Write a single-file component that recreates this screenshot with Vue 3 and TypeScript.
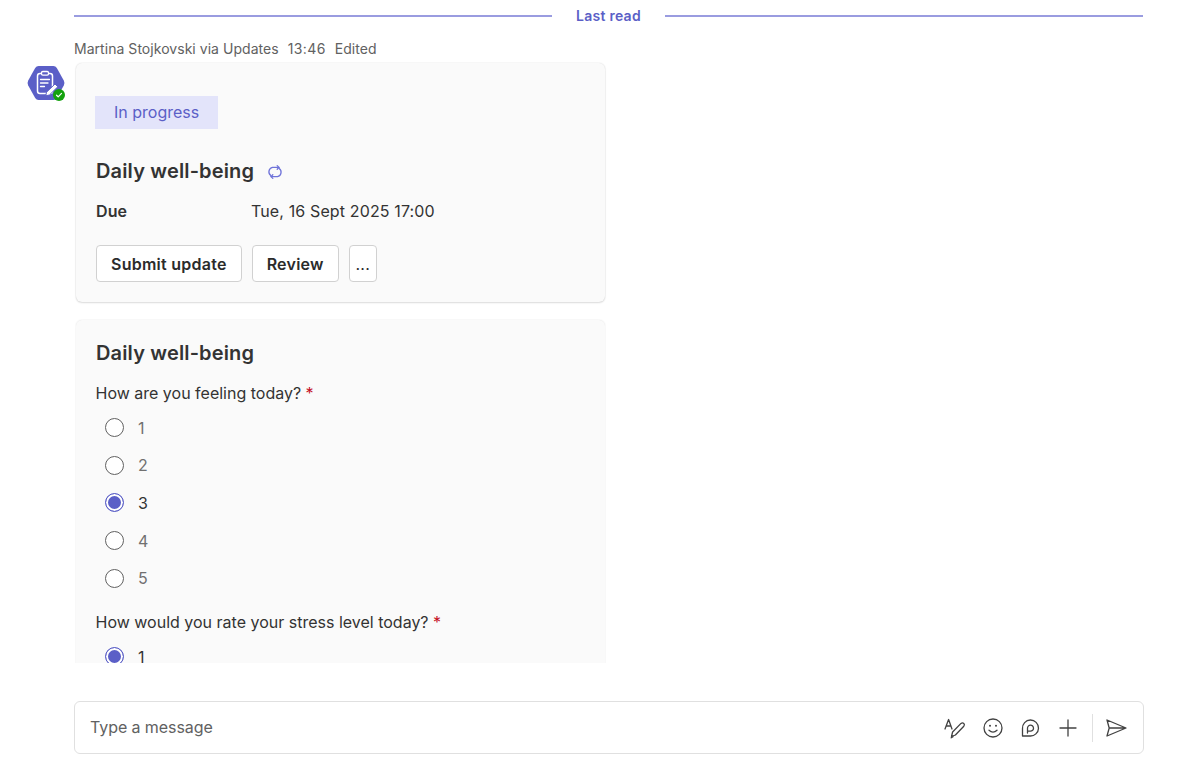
<script setup lang="ts">
const options = [
  { label: '1', checked: false },
  { label: '2', checked: false },
  { label: '3', checked: true },
  { label: '4', checked: false },
  { label: '5', checked: false },
]
</script>

<template>
  <div class="page">
    <div class="feed">
      <div class="divider">
        <span class="line"></span>
        <span class="divider-text">Last read</span>
        <span class="line"></span>
      </div>
      <div class="message">
        <div class="avatar">
          <svg width="38" height="36" viewBox="0 0 38 36">
            <path d="M1.2 15.6 L8.2 3 Q9.4 1 11.6 1 H26.4 Q28.6 1 29.8 3 L36.8 15.6 Q38 18 36.8 20.4 L29.8 33 Q28.6 35 26.4 35 H11.6 Q9.4 35 8.2 33 L1.2 20.4 Q0 18 1.2 15.6 Z" fill="#5b5fc7" />
            <rect x="10.5" y="8.5" width="15" height="20" rx="2.5" fill="none" stroke="#fff" stroke-width="1.5" />
            <rect x="14.5" y="6.5" width="7" height="3.6" rx="1.3" fill="#5b5fc7" stroke="#fff" stroke-width="1.3" />
            <path d="M13.5 14.5 H22.5 M13.5 18 H21 M13.5 21.5 H17.5" stroke="#fff" stroke-width="1.3" stroke-linecap="round" />
            <path d="M19.5 27.2 L28 19 L30.8 21.8 L22.4 30 L18.8 30.8 Z" fill="#fff" stroke="#5b5fc7" stroke-width="1" />
          </svg>
          <span class="presence">
            <svg width="8" height="8" viewBox="0 0 8 8">
              <path d="M1.5 4.2 L3.2 5.8 L6.5 2.4" fill="none" stroke="#fff" stroke-width="1.2" stroke-linecap="round" stroke-linejoin="round" />
            </svg>
          </span>
        </div>
        <div class="content">
          <div class="meta">
            <span>Martina Stojkovski via Updates</span>
            <span class="time">13:46</span>
            <span>Edited</span>
          </div>
          <section class="card card-status">
            <div class="badge">In progress</div>
            <div class="title-row">
              <h2 class="title">Daily well-being</h2>
              <svg class="repeat" width="16" height="16" viewBox="0 0 16 16" fill="none" stroke="#6f73d9" stroke-width="1.3" stroke-linecap="round" stroke-linejoin="round">
                <path d="M3.8 11.6 A4.6 4.6 0 0 1 5.5 3.4 H12" />
                <path d="M10.2 1.6 L12 3.4 L10.2 5.2" />
                <path d="M12.2 4.4 A4.6 4.6 0 0 1 10.5 12.6 H4" />
                <path d="M5.8 10.8 L4 12.6 L5.8 14.4" />
              </svg>
            </div>
            <div class="due">
              <span class="due-label">Due</span>
              <span>Tue, 16 Sept 2025 17:00</span>
            </div>
            <div class="actions">
              <button class="btn" type="button">Submit update</button>
              <button class="btn" type="button">Review</button>
              <button class="btn btn-more" type="button">...</button>
            </div>
          </section>
          <section class="card card-form">
            <h2 class="title">Daily well-being</h2>
            <p class="question">How are you feeling today? <span class="req">*</span></p>
            <div class="radios">
              <div v-for="o in options" :key="o.label" class="radio" :class="{ on: o.checked }">
                <span class="dot"></span>
                <span>{{ o.label }}</span>
              </div>
            </div>
            <p class="question q2">How would you rate your stress level today? <span class="req">*</span></p>
            <div class="radios r2">
              <div class="radio on">
                <span class="dot"></span>
                <span>1</span>
              </div>
            </div>
          </section>
        </div>
      </div>
    </div>
    <div class="composer">
      <span class="placeholder">Type a message</span>
      <div class="tools">
        <svg width="24" height="24" viewBox="0 0 24 24" fill="none" stroke="#424242" stroke-width="1.3" stroke-linecap="round" stroke-linejoin="round">
          <path d="M2 13 L5.6 3.5 L9 13 M3.2 10 H8" />
          <path d="M8.5 20.5 L9.6 16 L18 7.4 Q19.5 6.2 20.8 7.4 Q22 8.8 20.8 10.2 L12.4 19 Z" />
          <path d="M8.2 21.8 L10 20.6" />
        </svg>
        <svg width="24" height="24" viewBox="0 0 24 24" fill="none" stroke="#424242" stroke-width="1.3" stroke-linecap="round">
          <circle cx="12" cy="12" r="9" />
          <path d="M8 14.2 Q12 18 16 14.2" />
          <circle cx="9" cy="9.8" r="1" fill="#424242" stroke="none" />
          <circle cx="15" cy="9.8" r="1" fill="#424242" stroke="none" />
        </svg>
        <svg width="24" height="24" viewBox="0 0 24 24" fill="none" stroke="#424242" stroke-width="1.3" stroke-linecap="round" stroke-linejoin="round">
          <path d="M4.5 20 V12.5 A8 8 0 1 1 12 20 Z" />
          <path d="M9.5 17 V12.3 A3 3 0 1 1 12.5 15.2 H9.7" />
        </svg>
        <svg width="24" height="24" viewBox="0 0 24 24" fill="none" stroke="#424242" stroke-width="1.3" stroke-linecap="round">
          <path d="M12 4 V20 M4 12 H20" />
        </svg>
        <span class="sep"></span>
        <svg class="send" width="24" height="24" viewBox="0 0 24 24" fill="none" stroke="#424242" stroke-width="1.3" stroke-linejoin="round">
          <path d="M3 4 L22 12 L3 20 L5.2 12 Z M5.2 12 H22" />
        </svg>
      </div>
    </div>
  </div>
</template>

<style scoped>
.page {
  width: 1200px;
  height: 770px;
  display: flex;
  flex-direction: column;
  overflow: hidden;
  background: #fff;
  font-family: Inter, "Noto Sans", sans-serif;
  color: #242424;
}
.feed {
  height: 663px;
  overflow: hidden;
  flex: none;
}
.divider {
  margin: 5.5px 57px 0 74px;
  height: 20px;
  display: flex;
  align-items: center;
  gap: 24px;
}
.line {
  flex: 1;
  height: 2px;
  background: #9a9ce0;
}
.divider-text {
  font-size: 14px;
  font-weight: 600;
  color: #5b5fc7;
  letter-spacing: 0.25px;
}
.message {
  display: flex;
  margin-top: 13.5px;
}
.avatar {
  position: relative;
  flex: none;
  width: 38px;
  height: 36px;
  margin: 26px 9px 0 27px;
}
.presence {
  position: absolute;
  right: 0;
  bottom: 0;
  width: 12px;
  height: 12px;
  border-radius: 50%;
  background: #13a10e;
  display: flex;
  align-items: center;
  justify-content: center;
}
.content {
  width: 532px;
}
.meta {
  height: 19px;
  display: flex;
  gap: 9px;
  align-items: center;
  font-size: 14px;
  letter-spacing: 0.04px;
  color: #616161;
}
.time {
  letter-spacing: 0.4px;
}
.card {
  width: 529px;
  margin-left: 2px;
  box-sizing: border-box;
  background: #fafafa;
  border-radius: 6px;
  padding: 0 20px;
}
.card-status {
  margin-top: 5px;
  height: 239px;
  padding-top: 33px;
  box-shadow: 0 0 1.5px rgba(0, 0, 0, 0.14), 0 1px 2px rgba(0, 0, 0, 0.12);
}
.card-form {
  margin-top: 18px;
  padding-top: 19px;
  height: 420px;
  box-shadow: 0 0 1.5px rgba(0, 0, 0, 0.14);
}
.badge {
  display: inline-block;
  height: 33px;
  line-height: 33px;
  padding: 0 19px;
  margin-left: -1px;
  font-size: 16px;
  color: #5b5fc7;
  background: #e3e4fa;
}
.title-row {
  display: flex;
  align-items: center;
  gap: 13px;
  margin-top: 28px;
}
.title {
  margin: 0;
  font-size: 20px;
  line-height: 28px;
  font-weight: 600;
  letter-spacing: 0.15px;
  color: #333;
}
.repeat {
  margin-top: 1px;
}
.due {
  display: flex;
  font-size: 16px;
  line-height: 22px;
  letter-spacing: 0.13px;
  margin-top: 15px;
  color: #333;
}
.due-label {
  width: 155px;
  font-weight: 600;
}
.actions {
  display: flex;
  gap: 10px;
  margin-top: 23px;
}
.btn {
  height: 37px;
  padding: 0 14px;
  background: #fff;
  border: 1px solid #d1d1d1;
  border-radius: 4px;
  font-family: inherit;
  font-size: 16px;
  font-weight: 600;
  letter-spacing: 0.25px;
  color: #2b2b2b;
}
.btn-more {
  width: 28px;
  padding: 0;
  font-weight: 400;
}
.question {
  margin: 15px 0 0 -0.5px;
  font-size: 16px;
  line-height: 22px;
  color: #333;
}
.req {
  color: #c50f1f;
}
.q2 {
  margin-top: 14px;
}
.radios {
  margin-top: 5px;
  display: flex;
  flex-direction: column;
}
.r2 {
  margin-top: 5px;
}
.radio {
  height: 37.6px;
  display: flex;
  align-items: center;
  gap: 14px;
  padding-left: 9px;
  font-size: 16px;
  color: #707070;
}
.radio.on {
  color: #333;
}
.dot {
  box-sizing: border-box;
  width: 19px;
  height: 19px;
  border-radius: 50%;
  border: 1.2px solid #616161;
  background: #fff;
}
.radio.on .dot {
  border: 1.5px solid #5b5fc7;
  background: #5b5fc7;
  box-shadow: inset 0 0 0 2px #fff;
}
.composer {
  box-sizing: border-box;
  margin: 38px 56px 0 74px;
  height: 53px;
  padding: 0 15px;
  display: flex;
  align-items: center;
  justify-content: space-between;
  border: 1px solid #e0e0e0;
  border-radius: 6px;
  background: #fff;
}
.placeholder {
  font-size: 16px;
  letter-spacing: -0.08px;
  margin-top: -1px;
  color: #616161;
}
.tools {
  display: flex;
  align-items: center;
  gap: 13.5px;
}
.sep {
  width: 1px;
  height: 28px;
  margin-left: -1.5px;
  background: #e0e0e0;
}
.send {
  margin-left: -2px;
}
</style>
